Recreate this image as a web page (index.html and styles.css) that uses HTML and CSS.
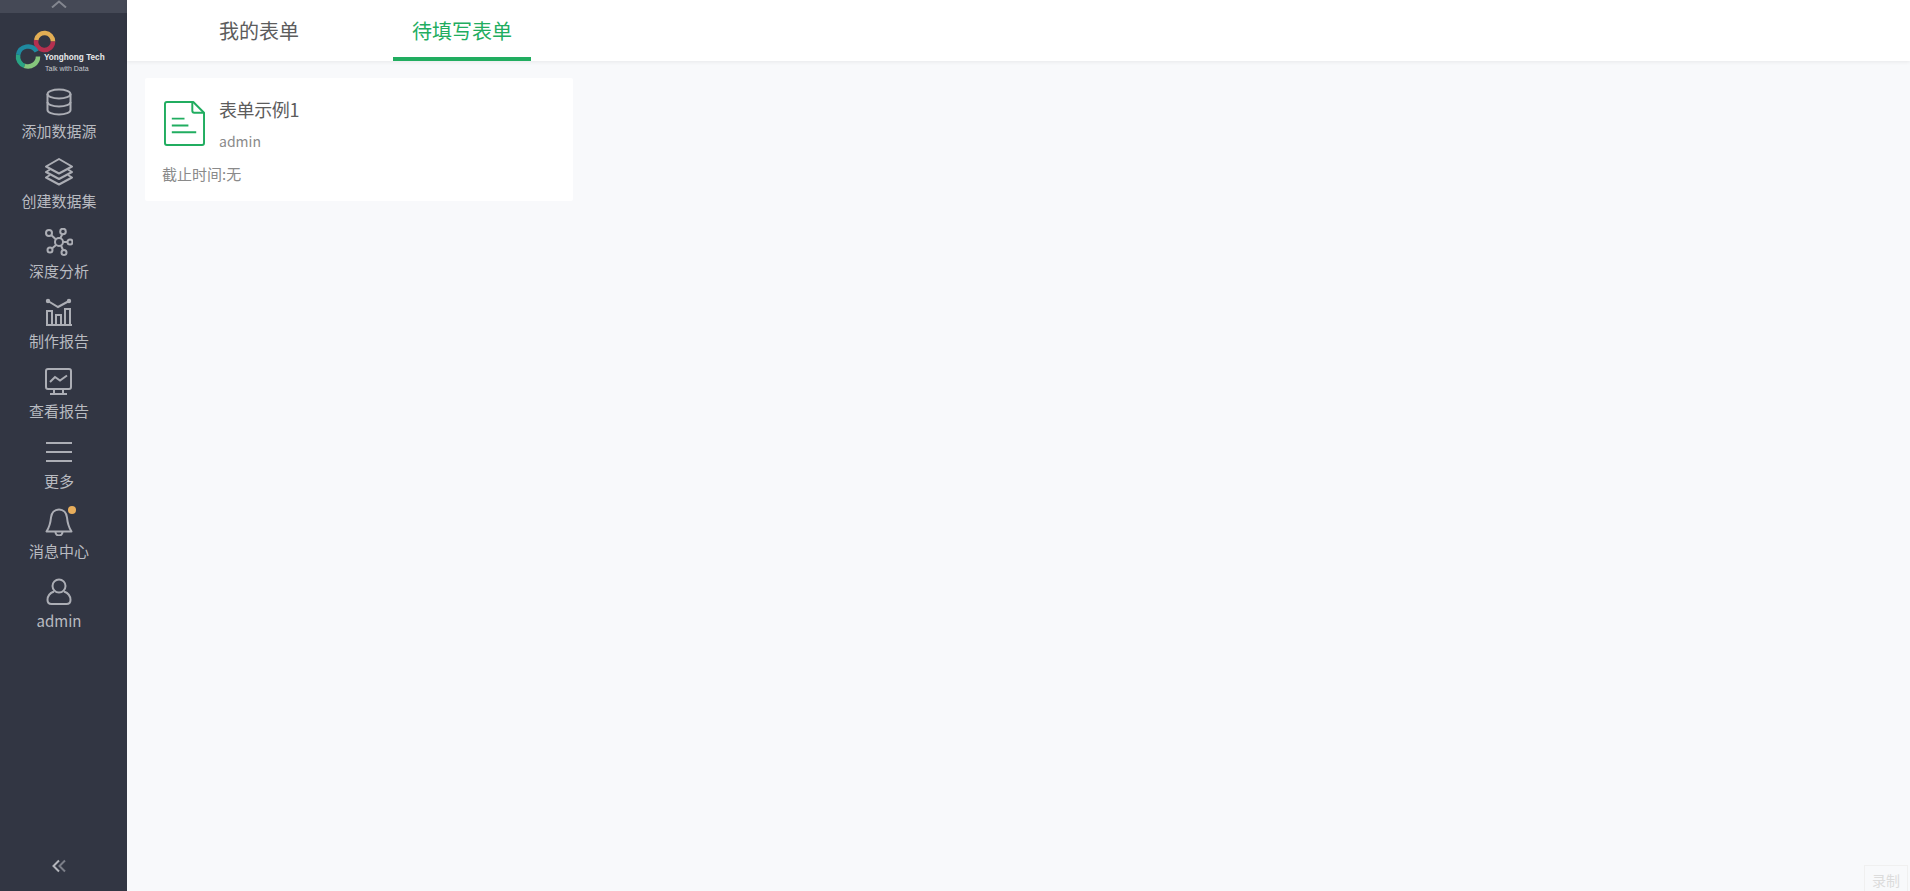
FILE: index.html
```html
<!DOCTYPE html>
<html lang="zh-CN">
<head>
  <meta charset="UTF-8" />
  <title>我的表单</title>
  <link rel="stylesheet" href="styles.css">
</head>
<body>
  <div class="sidebar">
    <div class="top-strip">
      <svg width="16" height="8" viewBox="0 0 16 8"><path d="M1 7.500 8 1.500l7 6" fill="none" stroke="#83868f" stroke-width="2"/></svg>
    </div>

    <div class="logo">
      <svg class="logo-rings" width="56" height="57" viewBox="0 0 56 57">
        <g fill="none" stroke-width="4.500">
          <path d="M43 15.500A8.500 8.500 0 0 0 26.130 14.020" stroke="#e2ae54"/>
          <path d="M26.130 14.020A8.500 8.500 0 1 0 43 15.500" stroke="#b5304f"/>
          <path d="M26.660 25.500A10 10 0 0 0 8.150 28.760" stroke="#1f8aa0"/>
          <path d="M8.150 28.760A10 10 0 0 0 14.580 39.900" stroke="#2aa484"/>
          <path d="M14.580 39.900A10 10 0 0 0 28 30.500" stroke="#86c67c"/>
        </g>
      </svg>
      <div class="logo-name">Yonghong Tech</div>
      <div class="logo-slogan">Talk with Data</div>
    </div>

    <div class="nav">
      <div class="nav-item">
        <svg class="nav-icon" width="28" height="28" viewBox="0 0 28 28" fill="none" stroke="#acaeb5" stroke-width="2">
          <ellipse cx="14" cy="6" rx="11.500" ry="4.500"/>
          <path d="M2.500 6v16c0 2.500 5 4.500 11.500 4.500S25.500 24.500 25.500 22V6"/>
          <path d="M2.500 14c0 2.500 5 4.500 11.500 4.500S25.500 16.500 25.500 14"/>
        </svg>
        <span>添加数据源</span>
      </div>
      <div class="nav-item">
        <svg class="nav-icon" width="28" height="28" viewBox="0 0 28 28" fill="none" stroke="#acaeb5" stroke-width="2" stroke-linejoin="round">
          <path d="M14 1 27 8.500 14 15.500 1 8.500z"/>
          <path d="M5 11.500 1 14l13 7 13-7-4-2.500"/>
          <path d="M5 17 1 19.500l13 7 13-7-4-2.500"/>
        </svg>
        <span>创建数据集</span>
      </div>
      <div class="nav-item">
        <svg class="nav-icon" width="28" height="28" viewBox="0 0 28 28" fill="none" stroke="#acaeb5" stroke-width="2">
          <circle cx="14" cy="14" r="4"/>
          <circle cx="4" cy="5" r="3"/>
          <circle cx="18" cy="3.500" r="2.800"/>
          <circle cx="25" cy="14" r="2.500"/>
          <circle cx="19" cy="24.500" r="2.500"/>
          <circle cx="5" cy="22" r="2.500"/>
          <path d="m6.200 7 4.800 4.500M17.300 6.200 15.300 10.200M22.500 14h-4.500M18 22l-2-4.500M7 20.500l4-3.500"/>
        </svg>
        <span>深度分析</span>
      </div>
      <div class="nav-item">
        <svg class="nav-icon" width="28" height="28" viewBox="0 0 28 28" fill="none" stroke="#acaeb5" stroke-width="2">
          <path d="M1 27h26"/>
          <path d="M2 26V13h5v13M11 26v-9h5v9M20 26V11h5v15"/>
          <path d="M3 3 13 9 24 3"/>
          <circle cx="3" cy="3" r="1.200" fill="#acaeb5"/>
          <circle cx="24" cy="3" r="1.200" fill="#acaeb5"/>
        </svg>
        <span>制作报告</span>
      </div>
      <div class="nav-item">
        <svg class="nav-icon" width="28" height="28" viewBox="0 0 28 28" fill="none" stroke="#acaeb5" stroke-width="2">
          <rect x="1" y="1" width="25" height="20" rx="2"/>
          <path d="m5 14 5-5 5 3.500 7-5M9 21v5M18 21v5M5 26h17"/>
        </svg>
        <span>查看报告</span>
      </div>
      <div class="nav-item">
        <svg class="nav-icon" width="28" height="28" viewBox="0 0 28 28" fill="none" stroke="#acaeb5" stroke-width="2">
          <path d="M1 5h26M1 14h26M1 23h26"/>
        </svg>
        <span>更多</span>
      </div>
      <div class="nav-item">
        <svg class="nav-icon" width="28" height="28" viewBox="0 0 28 28" fill="none" stroke="#acaeb5" stroke-width="2" stroke-linejoin="round">
          <path d="M14 1.500c-4.500 0-7.500 3.500-8 8-.5 5.500-1.500 9.500-4.500 14h25c-3-4.500-4-8.500-4.500-14-.5-4.500-3.500-8-8-8z"/>
          <path d="M10.500 24a3.500 3.500 0 0 0 7 0"/>
        </svg>
        <i class="badge"></i>
        <span>消息中心</span>
      </div>
      <div class="nav-item">
        <svg class="nav-icon" width="28" height="28" viewBox="0 0 28 28" fill="none" stroke="#acaeb5" stroke-width="2">
          <circle cx="14" cy="8" r="6.500"/>
          <path d="M9 13.500C5 15 2.500 18 2.500 22c0 2.500 1.500 4 4 4h15c2.500 0 4-1.500 4-4 0-4-2.500-7-6.500-8.500"/>
        </svg>
        <span>admin</span>
      </div>
    </div>

    <div class="collapse">
      <svg width="14" height="14" viewBox="0 0 14 14" fill="none" stroke-width="2">
        <path d="M7 1.500 1.500 7 7 12.500" stroke="#b4b6bc"/>
        <path d="M13 1.500 7.500 7l5.500 5.500" stroke="#7b7e88"/>
      </svg>
    </div>
  </div>

  <div class="main">
    <div class="tabs">
      <div class="tab">我的表单</div>
      <div class="tab active">待填写表单</div>
    </div>

    <div class="content">
      <div class="form-card">
        <div class="card-top">
          <svg class="file-icon" width="41" height="45" viewBox="0 0 42 46" fill="none" stroke="#21ad60" stroke-width="2" stroke-linejoin="round">
            <path d="M3 1h27l11 11v31a2 2 0 0 1-2 2H3a2 2 0 0 1-2-2V3a2 2 0 0 1 2-2z"/>
            <path d="M29 1v9a2 2 0 0 0 2 2h10"/>
            <path d="M8 18h13M8 25h17M8 32h25"/>
          </svg>
          <div class="card-info">
            <div class="card-title">表单示例1</div>
            <div class="card-user">admin</div>
          </div>
        </div>
        <div class="card-deadline">截止时间:无</div>
      </div>
    </div>
  </div>

  <div class="record-btn">录制</div>
</body>
</html>
```

FILE: styles.css
```css
html, body {
  height: 100%;
}
body {
  font-family: 'Noto Sans CJK SC', 'Noto Sans', sans-serif;
  margin: 0;
  padding: 0;
  display: flex;
  height: 891px;
  overflow: hidden;
  background: #f8f9fb;
}
.sidebar {
  width: 127px;
  flex-shrink: 0;
  background: #323643;
  display: flex;
  flex-direction: column;
}
.top-strip {
  width: 100%;
  height: 13px;
  background: #454956;
  padding-right: 9px;
  box-sizing: border-box;
  display: flex;
  justify-content: center;
  align-items: flex-start;
}
.logo {
  position: relative;
  width: 127px;
  height: 72px;
}
.logo-rings {
  position: absolute;
  left: 10px;
  top: 13px;
}
.logo-name {
  position: absolute;
  left: 44px;
  top: 38px;
  font-family: 'Liberation Sans', sans-serif;
  font-size: 8.200px;
  font-weight: bold;
  line-height: 13px;
  color: #e8e9eb;
  white-space: nowrap;
}
.logo-slogan {
  position: absolute;
  left: 45px;
  top: 51px;
  font-family: 'Liberation Sans', sans-serif;
  font-size: 7px;
  line-height: 9px;
  color: #c9cbd0;
  white-space: nowrap;
}
.nav {
  display: flex;
  flex-direction: column;
  width: 118px;
}
.nav-item {
  position: relative;
  height: 70px;
  display: flex;
  flex-direction: column;
  align-items: center;
  padding-top: 3px;
  box-sizing: border-box;
  font-size: 15px;
  line-height: 22px;
  color: #b9bbc1;
}
.nav-icon {
  display: block;
  margin-bottom: 4px;
}
.badge {
  position: absolute;
  left: 68px;
  top: 1px;
  width: 8px;
  height: 8px;
  border-radius: 50%;
  background: #e8ae5c;
}
.collapse {
  margin-top: auto;
  width: 118px;
  height: 32px;
  display: flex;
  justify-content: center;
}
.main {
  flex: 1;
  min-width: 0;
  display: flex;
  flex-direction: column;
}
.tabs {
  height: 61px;
  flex-shrink: 0;
  background: #fff;
  box-shadow: 0 1px 4px rgba(0, 0, 0, 0.07);
  display: flex;
  padding-left: 73px;
  gap: 75px;
}
.tab {
  height: 61px;
  padding: 0 19px;
  box-sizing: border-box;
  font-size: 20px;
  line-height: 61px;
  color: #5c5c5c;
}
.tab.active {
  color: #21ad60;
  border-bottom: 4px solid #21ad60;
}
.content {
  padding: 17px 18px;
}
.form-card {
  width: 428px;
  height: 123px;
  background: #fff;
  border-radius: 2px;
  box-sizing: border-box;
  padding: 23px 17px 0;
}
.card-top {
  display: flex;
}
.file-icon {
  margin-left: 2px;
  margin-right: 14px;
  flex-shrink: 0;
}
.card-title {
  font-size: 18px;
  line-height: 22px;
  letter-spacing: -0.400px;
  color: #5c5c5c;
  margin-top: -3px;
}
.card-user {
  font-size: 14px;
  line-height: 20px;
  color: #8a8a8a;
  margin-top: 11px;
}
.card-deadline {
  margin-top: 13px;
  font-size: 15px;
  line-height: 20px;
  color: #8a8a8a;
}
.record-btn {
  position: absolute;
  right: 2px;
  bottom: 0;
  width: 44px;
  height: 26px;
  box-sizing: border-box;
  border: 1px solid #f0f0f0;
  border-bottom: 0;
  font-size: 14px;
  line-height: 28px;
  text-align: center;
  color: #dcdcdc;
}
```
